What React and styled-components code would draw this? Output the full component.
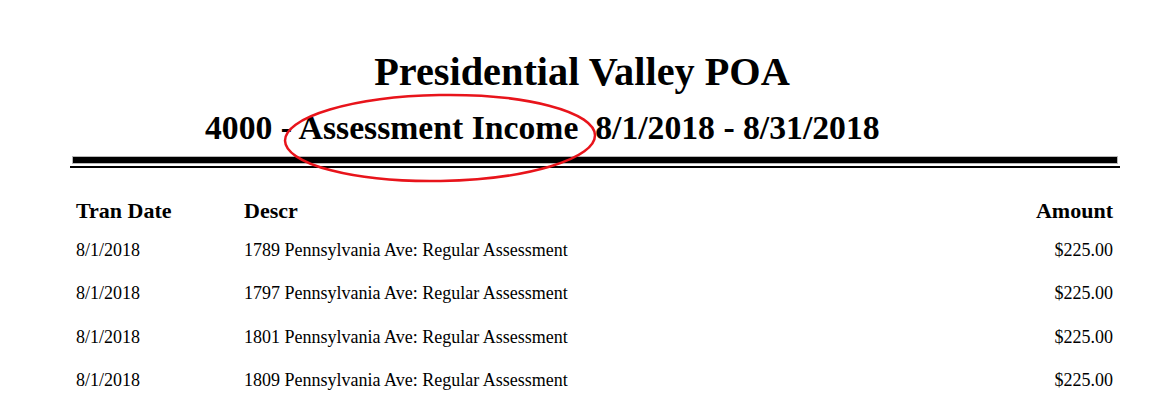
import styled, { createGlobalStyle } from 'styled-components';

const GlobalStyle = createGlobalStyle`
  body {
    margin: 0;
    background: #ffffff;
    font-family: "Liberation Serif", "Times New Roman", serif;
    color: #000000;
  }
`;

const Page = styled.div`
  position: relative;
  width: 1173px;
  height: 418px;
  overflow: hidden;
  padding: 0 53px 0 70px;
  box-sizing: border-box;
`;

const Title = styled.h1`
  margin: 0;
  padding: 52px 26px 0 0;
  font-size: 40.3px;
  line-height: 40px;
  font-weight: bold;
  text-align: center;
`;

const SubTitle = styled.h2`
  margin: 0;
  padding: 19px 0 0 135px;
  font-size: 33.7px;
  line-height: 34px;
  font-weight: bold;
  white-space: pre;
`;

const ThickRule = styled.div`
  margin: 12px 3px 0 3px;
  height: 6px;
  background: #000000;
  box-shadow: 0 0 0 1px #b8b8b8;
`;

const ThinRule = styled.div`
  margin-top: 3px;
  height: 2px;
  background: #000000;
`;

const Table = styled.div`
  display: flex;
  flex-direction: column;
  padding: 32px 7px 0 6px;
`;

const Row = styled.div`
  display: grid;
  grid-template-columns: 168px 1fr 160px;
  align-items: baseline;
  height: ${(p) => (p.$head ? '39px' : '43.3px')};
  font-size: ${(p) => (p.$head ? '22px' : '18px')};
  font-weight: ${(p) => (p.$head ? 'bold' : 'normal')};
  line-height: 22px;
`;

const Cell = styled.div`
  text-align: ${(p) => (p.$right ? 'right' : 'left')};
  white-space: nowrap;
`;

const Marker = styled.svg`
  position: absolute;
  left: 280px;
  top: 90px;
  pointer-events: none;
`;

const rows = [
  { date: '8/1/2018', descr: '1789 Pennsylvania Ave: Regular Assessment', amount: '$225.00' },
  { date: '8/1/2018', descr: '1797 Pennsylvania Ave: Regular Assessment', amount: '$225.00' },
  { date: '8/1/2018', descr: '1801 Pennsylvania Ave: Regular Assessment', amount: '$225.00' },
  { date: '8/1/2018', descr: '1809 Pennsylvania Ave: Regular Assessment', amount: '$225.00' },
];

const App = () => {
  return (
    <Page>
      <GlobalStyle />
      <Title>Presidential Valley POA</Title>
      <SubTitle>4000 - Assessment Income  8/1/2018 - 8/31/2018</SubTitle>
      <ThickRule />
      <ThinRule />
      <Table>
        <Row $head>
          <Cell>Tran Date</Cell>
          <Cell>Descr</Cell>
          <Cell $right>Amount</Cell>
        </Row>
        {rows.map((r, i) => (
          <Row key={i}>
            <Cell>{r.date}</Cell>
            <Cell>{r.descr}</Cell>
            <Cell $right>{r.amount}</Cell>
          </Row>
        ))}
      </Table>
      <Marker width="320" height="96" viewBox="0 0 320 96">
        <ellipse cx="160" cy="48" rx="155" ry="43" fill="none" stroke="#e8141b" strokeWidth="2.5" transform="rotate(-1 160 48)" />
      </Marker>
    </Page>
  );
};

export default App;
